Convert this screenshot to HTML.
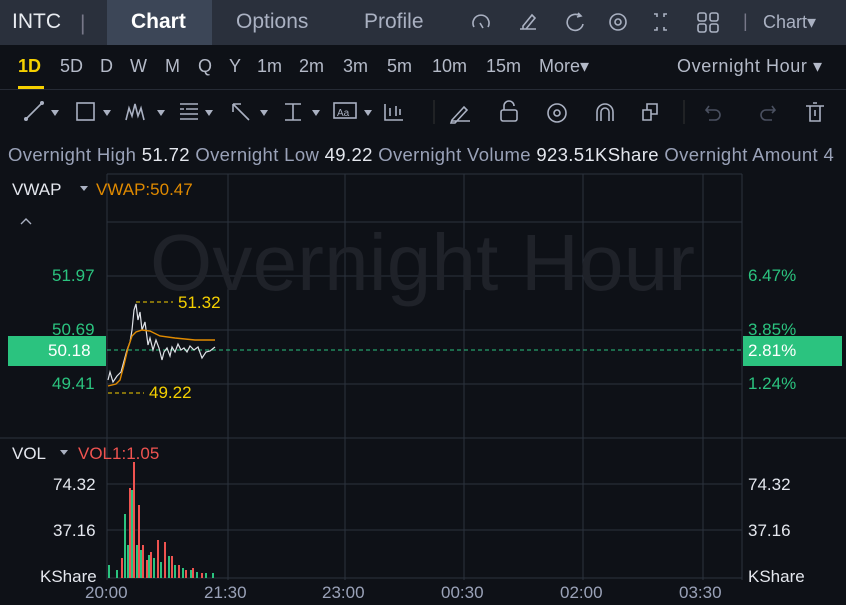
<!DOCTYPE html>
<html><head><meta charset="utf-8"><style>
*{margin:0;padding:0;box-sizing:border-box}
body{width:846px;height:605px;background:#0e1117;font-family:"Liberation Sans","Noto Sans CJK SC",sans-serif;overflow:hidden;position:relative;color:#c9cdd6}
.top{position:absolute;left:0;top:0;width:846px;height:45px;background:#2a303c}
.t{position:absolute;font-size:21px;top:10px;color:#aab1c2}
.row2{position:absolute;left:0;top:45px;width:846px;height:45px;background:#0e1117;border-bottom:1px solid #262b35}
.p{position:absolute;top:56px;font-size:18px;color:#b4bac8}
svg{position:absolute;left:0;top:0}
.lab{position:absolute;font-size:17px}
</style></head><body>
<div class="top"></div>
<div style="position:absolute;left:107px;top:0;width:105px;height:45px;background:#3c4657"></div>
<div class="t" style="left:12px;color:#e8ebf0">INTC</div>
<div class="t" style="left:80px;top:12px;color:#778">|</div>
<div class="t" style="left:131px;color:#fff;font-weight:bold">Chart</div>
<div class="t" style="left:236px">Options</div>
<div class="t" style="left:364px">Profile</div>
<div class="t" style="left:743px;top:11px;color:#778;font-size:18px">|</div>
<div class="t" style="left:763px;top:12px;font-size:18px">Chart▾</div>
<div class="row2"></div>
<div class="p" style="left:18px;color:#f5d000;font-weight:bold">1D</div>
<div style="position:absolute;left:18px;top:86px;width:26px;height:3px;background:#f5d000"></div>
<div class="p" style="left:60px">5D</div><div class="p" style="left:100px">D</div>
<div class="p" style="left:130px">W</div><div class="p" style="left:165px">M</div>
<div class="p" style="left:198px">Q</div><div class="p" style="left:229px">Y</div>
<div class="p" style="left:257px">1m</div><div class="p" style="left:299px">2m</div>
<div class="p" style="left:343px">3m</div><div class="p" style="left:387px">5m</div>
<div class="p" style="left:432px">10m</div><div class="p" style="left:486px">15m</div>
<div class="p" style="left:539px">More▾</div>
<div class="p" style="left:677px;letter-spacing:0.6px">Overnight Hour ▾</div>
<div style="position:absolute;left:8px;top:144px;font-size:18.5px;letter-spacing:0.35px;white-space:nowrap;color:#9aa2b8">Overnight High <span style="color:#e4e7ee">51.72</span> Overnight Low <span style="color:#e4e7ee">49.22</span> Overnight Volume <span style="color:#e4e7ee">923.51KShare</span> Overnight Amount 4</div>
<svg width="846" height="605" viewBox="0 0 846 605">
<g stroke="#aab1c2" stroke-width="1.6" fill="none">
<path d="M26 119 L42 103"/>
<rect x="77" y="103" width="17" height="17"/>
<path d="M126 120l3-12 3 8 3-12 3 12 3-8 3 12"/>
<path d="M180 104h18M180 109h4M186 109h12M180 114h18M180 119h18"/>
<path d="M233 104l16 16M233 104v8M233 104h8"/>
<path d="M285 104h16M293 104v16M285 120h16"/>
<rect x="334" y="103" width="22" height="15"/>
<path d="M385 104v16h18M390 108v8M396 106v10M400 109v6"/>
<path d="M452 120l12-13 3 3-12 13h-4zM452 121h18"/>
<rect x="501" y="110" width="16" height="11" rx="2"/><path d="M504 110v-4a5 5 0 0 1 10 0"/>
<circle cx="557" cy="113" r="9"/><circle cx="557" cy="113" r="3"/>
<path d="M597 121v-9a8 8 0 0 1 16 0v9M601 121v-9a4 4 0 0 1 8 0v9"/>
<path d="M643 110h8v10h-8zM651 114h6v-10h-10v6"/>
<path d="M709 106l-3 4 3 3M706 110h9a5 5 0 0 1 0 10h-6" stroke="#4a5060"/>
<path d="M772 106l3 4-3 3M775 110h-9a5 5 0 0 0 0 10h6" stroke="#4a5060"/>
<path d="M806 106h18M810 106v15h10v-15M813 103h4M815 110v6"/>
<path d="M474 27a8 8 0 1 1 14 0M480 23l3 5M520 29h16M523 26l9-11 3 3-9 11h-3zM580 16a8 8 0 1 0 3 8M578 13l3 3-4 1"/>
<circle cx="618" cy="22" r="3"/><circle cx="618" cy="22" r="8"/>
<path d="M654 14h3v3M667 14h-3v3M654 30h3v-3M667 30h-3v-3"/>
<rect x="698" y="13" width="8" height="8" rx="2"/><rect x="710" y="13" width="8" height="8" rx="2"/><rect x="698" y="24" width="8" height="8" rx="2"/><rect x="710" y="24" width="8" height="8" rx="2"/>
</g>
<g fill="#aab1c2"><circle cx="26" cy="119" r="2"/><circle cx="42" cy="103" r="2"/><path d="M51 110h8l-4 6zM103 110h8l-4 6zM157 110h8l-4 6zM205 110h8l-4 6zM260 110h8l-4 6zM312 110h8l-4 6zM364 110h8l-4 6z"/></g>
<text x="337" y="116" font-size="10" fill="#aab1c2" font-family="Liberation Sans">Aa</text>
<line x1="434" y1="100" x2="434" y2="124" stroke="#333"/><line x1="684" y1="100" x2="684" y2="124" stroke="#333"/>
<g stroke="#2c323e" stroke-width="1">
<path d="M107 174H742M107 222H742M107 276H742M107 330H742M107 384H742M0 438H846M107 484H742M107 530H742M107 578H742"/>
<path d="M107 174V580M228 174V580M345 174V580M464 174V580M583 174V580M703 174V580M742 174V580"/>
</g>
<text x="150" y="290" font-size="80" fill="#1f2229" font-family="Liberation Sans" textLength="545">Overnight Hour</text>
<line x1="107" y1="350" x2="742" y2="350" stroke="#2bc37f" stroke-dasharray="4,3"/>
<path d="M108 380 L110 372 113 382 117 376 121 372 124 361 127 350 130 342 132 330 134 310 136 304 138 320 140 312 142 330 145 322 148 345 150 338 153 350 156 340 159 348 162 360 164 352 167 348 170 356 172 347 175 352 178 344 181 350 184 348 187 352 190 346 194 350 198 347 202 358 206 352 210 351 215 347" stroke="#dfe2e8" stroke-width="1.2" fill="none"/>
<path d="M108 386 L116 384 120 380 124 365 128 348 132 336 136 332 142 330 150 331 160 336 175 338 195 340 215 340" stroke="#e08a00" stroke-width="1.4" fill="none"/>
<path d="M136 302H173M108 393H144" stroke="#f5d000" stroke-dasharray="4,3"/>
<g fill="#ef5350">
<rect x="133" y="462" width="2" height="116"/><rect x="129" y="488" width="2" height="90"/><rect x="138" y="505" width="2" height="73"/><rect x="142" y="545" width="2" height="33"/><rect x="150" y="552" width="2" height="26"/><rect x="157" y="540" width="2" height="38"/><rect x="164" y="542" width="2" height="36"/><rect x="171" y="556" width="2" height="22"/><rect x="146" y="560" width="2" height="18"/><rect x="121" y="558" width="2" height="20"/><rect x="185" y="570" width="2" height="8"/><rect x="192" y="568" width="2" height="10"/><rect x="201" y="573" width="2" height="5"/><rect x="178" y="565" width="2" height="13"/>
</g>
<g fill="#2bc37f">
<rect x="131" y="490" width="2" height="88"/><rect x="124" y="514" width="2" height="64"/><rect x="127" y="545" width="2" height="33"/><rect x="136" y="545" width="2" height="33"/><rect x="140" y="550" width="2" height="28"/><rect x="148" y="555" width="2" height="23"/><rect x="153" y="558" width="2" height="20"/><rect x="160" y="562" width="2" height="16"/><rect x="168" y="556" width="2" height="22"/><rect x="174" y="565" width="2" height="13"/><rect x="108" y="565" width="2" height="13"/><rect x="116" y="570" width="2" height="8"/><rect x="182" y="568" width="2" height="10"/><rect x="190" y="570" width="2" height="8"/><rect x="196" y="572" width="2" height="6"/><rect x="205" y="573" width="2" height="5"/><rect x="212" y="573" width="2" height="5"/>
</g>
<path d="M80 186h8l-4 5zM60 450h8l-4 5z" fill="#aab1c2"/>
<path d="M21 224l5-5 5 5" stroke="#aab1c2" fill="none" stroke-width="1.4"/>
</svg>
<div class="lab" style="left:12px;top:180px;color:#e4e7ee">VWAP</div>
<div class="lab" style="left:96px;top:180px;color:#e08a00">VWAP:50.47</div>
<div class="lab" style="left:52px;top:266px;color:#2bc37f">51.97</div>
<div class="lab" style="left:52px;top:320px;color:#2bc37f">50.69</div>
<div class="lab" style="left:52px;top:374px;color:#2bc37f">49.41</div>
<div style="position:absolute;left:8px;top:336px;width:98px;height:30px;background:#2bc37f"></div>
<div class="lab" style="left:48px;top:341px;color:#fff">50.18</div>
<div class="lab" style="left:748px;top:266px;color:#2bc37f">6.47%</div>
<div class="lab" style="left:748px;top:320px;color:#2bc37f">3.85%</div>
<div class="lab" style="left:748px;top:374px;color:#2bc37f">1.24%</div>
<div style="position:absolute;left:743px;top:336px;width:99px;height:30px;background:#2bc37f"></div>
<div class="lab" style="left:748px;top:341px;color:#fff">2.81%</div>
<div class="lab" style="left:178px;top:293px;color:#f5d000">51.32</div>
<div class="lab" style="left:149px;top:383px;color:#f5d000">49.22</div>
<div class="lab" style="left:12px;top:444px;color:#e4e7ee">VOL</div>
<div class="lab" style="left:78px;top:444px;color:#ef5350">VOL1:1.05</div>
<div class="lab" style="left:53px;top:475px;color:#e4e7ee">74.32</div>
<div class="lab" style="left:53px;top:521px;color:#e4e7ee">37.16</div>
<div class="lab" style="left:40px;top:567px;color:#e4e7ee">KShare</div>
<div class="lab" style="left:748px;top:475px;color:#e4e7ee">74.32</div>
<div class="lab" style="left:748px;top:521px;color:#e4e7ee">37.16</div>
<div class="lab" style="left:748px;top:567px;color:#e4e7ee">KShare</div>
<div class="lab" style="left:85px;top:583px;color:#9aa2b8">20:00</div>
<div class="lab" style="left:204px;top:583px;color:#9aa2b8">21:30</div>
<div class="lab" style="left:322px;top:583px;color:#9aa2b8">23:00</div>
<div class="lab" style="left:441px;top:583px;color:#9aa2b8">00:30</div>
<div class="lab" style="left:560px;top:583px;color:#9aa2b8">02:00</div>
<div class="lab" style="left:679px;top:583px;color:#9aa2b8">03:30</div>
</body></html>
